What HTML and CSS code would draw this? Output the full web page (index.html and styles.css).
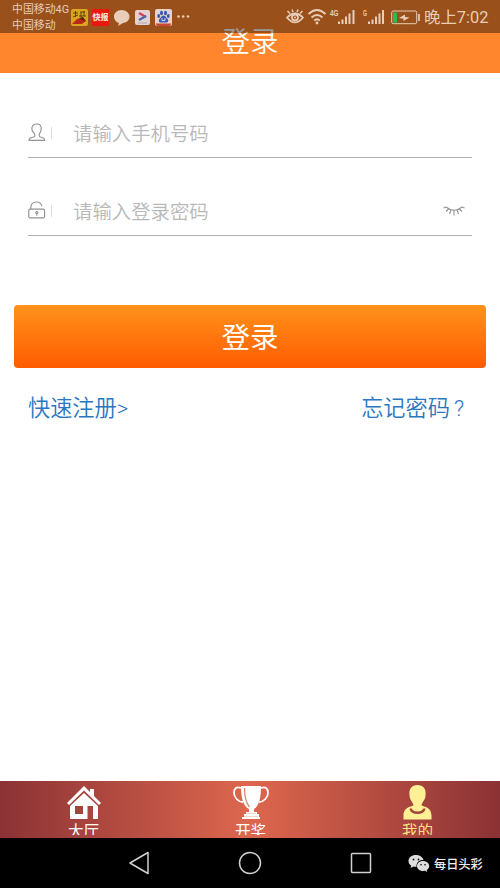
FILE: index.html
```html
<!DOCTYPE html>
<html lang="zh-CN">
<head>
<meta charset="utf-8">
<title>登录</title>
<link rel="stylesheet" href="styles.css">
</head>
<body>
<div class="screen">
  <header class="header">
    <h1 class="title">登录</h1>
    <div class="status">
      <div class="carrier"><div>中国移动4G</div><div>中国移动</div></div>
      <div class="notices">
        <svg class="app" viewBox="0 0 17 17"><rect width="17" height="17" rx="2" fill="#dba51f"/><path d="M2 4h5M4.500 2v6M2 8l5-2M9 3h5M10 3v5M13 2v5M8 7h7" stroke="#57390f" stroke-width=".9" fill="none"/><path d="M1 15l5-5 4-1 5 3-4 3z" fill="#b92915"/><path d="M8 9l4-1 3 4-4-1z" fill="#61220f"/></svg>
        <div class="app news">快报</div>
        <svg class="app" viewBox="0 0 17 17"><path d="M8.500 1C4 1 1 4 1 7.500S4 14 6 14l-1 3 5-3c4-.5 6.500-3 6.500-6.500C16.500 4 13 1 8.500 1z" fill="#e8cdb8"/></svg>
        <svg class="app" viewBox="0 0 17 17"><rect x="1" y="1" width="15" height="15" rx="2" fill="#e3d2d0"/><path d="M5 4l7 4" stroke="#d9415b" stroke-width="2.500"/><path d="M12 7l-7 4" stroke="#5468a8" stroke-width="2.500"/><path d="M4 14h9" stroke="#b4a5aa"/></svg>
        <svg class="app" viewBox="0 0 17 17"><rect width="17" height="17" rx="2" fill="#e3d2d0"/><g fill="#3657b2"><ellipse cx="6.500" cy="4" rx="1.500" ry="2.200"/><ellipse cx="10.500" cy="4" rx="1.500" ry="2.200"/><ellipse cx="3.700" cy="7" rx="1.400" ry="2"/><ellipse cx="13.300" cy="7" rx="1.400" ry="2"/><path d="M8.500 6.500C6 7 6 9 4.500 10s-.5 4 2 3.500h4c2.500.5 3.500-2.500 2-3.500S11 7 8.500 6.500z"/></g><path d="M7 9v2.500h3V9" stroke="#e3d2d0" fill="none"/><path d="M1 14.500h15v.5q0 2-2 2H3q-2 0-2-2z" fill="#cc4536"/></svg>
        <svg class="dots" viewBox="0 0 13 17"><g fill="#e8cdb8"><circle cx="1.500" cy="8.500" r="1.300"/><circle cx="6.200" cy="8.500" r="1.300"/><circle cx="11" cy="8.500" r="1.300"/></g></svg>
      </div>
      <svg class="signals" viewBox="0 0 136 22" fill="none" stroke="#e8cdb8">
        <path d="M1 12.500q8-8 16 0-8 10-16 0z" stroke-width="1.700"/><circle cx="9" cy="12.500" r="3" stroke-width="1.800"/><circle cx="9" cy="12.500" r="1" fill="#e8cdb8" stroke="none"/><path d="M1.500 6l2.500 2.500M6 4.500l1 2.500M12 4.500l-1 2.500M16.500 6l-2.500 2.500" stroke-width="1.500"/>
        <path d="M22.500 9q8.500-8 17 0M25.500 12.500q5.500-5 11 0M28.200 15.500q2.800-2.500 5.600 0" stroke-width="1.800"/><circle cx="31" cy="18" r="1.400" fill="#e8cdb8" stroke="none"/>
        <g fill="#e8cdb8" stroke="none"><path d="M52 16.500h2V19h-2zM55.500 14.500h2V19h-2zM59 11.500h2V19h-2zM62.500 8.500h2V19h-2zM66.500 5h2v14h-2zM82 16.500h2V19h-2zM85.500 14.500h2V19h-2zM89 11.500h2V19h-2zM92.500 8.500h2V19h-2zM96 5h2v14h-2z"/><text x="44" y="11" class="net" textLength="8.500" lengthAdjust="spacingAndGlyphs">4G</text><text x="77" y="11" class="net" textLength="4" lengthAdjust="spacingAndGlyphs">G</text></g>
        <rect x="105.700" y="6" width="25" height="12.700" rx="1.500" stroke-width="1"/><path d="M107 7.500h4v10h-4z" fill="#27bd4c" stroke="none"/><path d="M113 13l6-3.500v2.500l4.500 0.500-6 3.500v-2.300z" fill="#e8cdb8" stroke="none"/><path d="M133 9v7" stroke-width="1.700"/>
      </svg>
      <div class="time">晚上7:02</div>
    </div>
  </header>
  <main class="main">
    <div class="field">
      <svg class="icon" viewBox="0 0 19 21"><path d="M7 12C2 7 4 1.500 9.500 1.500S15 8 12 12q-1 3 2 3.500c3 .6 3.500 1.200 3.500 3.300h-16.500c0-2.100 1-2.700 4-3.300q3-.5 2-3.500z"/></svg>
      <span class="sep"></span><span class="hint">请输入手机号码</span>
    </div>
    <div class="field second">
      <svg class="icon" viewBox="0 0 19 21"><rect x=".8" y="9" width="16.700" height="9.300" rx="1.500"/><path d="M3 9V7.500C3 3.500 5.500 1.500 9 1.500c3 0 5 1.600 5.700 4.500M9.300 13.500v2.500"/><circle cx="9.300" cy="12.600" r="1.100"/></svg>
      <span class="sep"></span><span class="hint">请输入登录密码</span>
      <svg class="lash" viewBox="0 0 22 10"><path d="M3 1q8 6.500 16 0M.5 2L3 1M21.500 2L19 1M5.500 3L3 5.500M8 4L6.500 8M11 4.500V9.500M14 4l1.500 4M16.500 3l2.500 2.500"/></svg>
    </div>
    <div class="button">登录</div>
    <div class="links"><span>快速注册&gt;</span><span class="forgot">忘记密码<span class="question">?</span></span></div>
  </main>
  <nav class="tabs">
    <div class="tab"><svg viewBox="0 0 36 36" class="tabicon"><path d="M1 18L18 1l6 6V4h4v7l7 7-2 2L18 5.500 3 20z" fill="#fff"/><path d="M4 21L18 8l14 13v13H4zM9 21v8h8v-8zM21.500 21v13h5.500V21z" fill="#fff" fill-rule="evenodd"/></svg><span class="label">大厅</span></div>
    <div class="tab"><svg viewBox="0 0 36 36" class="tabicon"><path d="M8 1h20c0 12-2 20-7 23v3h3v2h2v3h1v2H9v-2h2v-3h2v-2h3v-3C10 21 8 13 8 1z" fill="#fff"/><path d="M8 3C3 1 1 4 1 8s4 9 9 9M28 3c5-2 7 1 7 5s-4 9-9 9" fill="none" stroke="#fff" stroke-width="1.800"/><path d="M11.500 3q0 13 5 19" fill="none" stroke="#d78b72" stroke-width="1.300"/><path d="M13 28.500h10M11 31.500h14" fill="none" stroke="#e8b8a8" stroke-width=".6"/></svg><span class="label">开奖</span></div>
    <div class="tab active"><svg viewBox="0 0 36 36" class="tabicon"><path d="M17.500 0c-5.500 0-9 4-8 10 0 5 3 6.500 4 10-1 2-10 1-10 11v3.500h28V31c0-10-9-9-10-11 1-3.500 4-5 4-10 1-6-2.500-10-8-10z" fill="#fff095"/><path d="M11 23.500c-1 5.500 14 5.500 13 0" fill="none" stroke="#a3463c" stroke-width="2.500"/></svg><span class="label">我的</span></div>
  </nav>
  <footer class="system">
    <svg class="keys" viewBox="0 0 244 26" fill="none" stroke="#d0d0d0" stroke-width="1.500"><path d="M1 13L19 2.500v21z" stroke-linejoin="round"/><circle cx="121" cy="13" r="10.500"/><rect x="222.500" y="3.500" width="19" height="19" rx="1"/></svg>
    <svg class="wechat" viewBox="0 0 22 19"><path d="M8 1C3.500 1 .5 3.700.5 7c0 2 1 3.700 2.700 4.800L2.500 14l3-1.500q1.500.5 3 .3C8 8 12 5.500 15.500 6 14.700 3 12 1 8 1z" fill="#ddd"/><path d="M15 7c-3.500 0-6 2.200-6 5s2.500 5 6 5l2-.3 2.200 1.300-.5-2c1.500-1 2.500-2.300 2.500-4 0-2.800-2.700-5-6.200-5z" fill="#ddd"/><g fill="#000"><circle cx="5.500" cy="5.500" r=".9"/><circle cx="10.500" cy="5.500" r=".9"/><circle cx="13" cy="10.700" r=".8"/><circle cx="17" cy="10.700" r=".8"/></g></svg>
    <span class="brand">每日头彩</span>
  </footer>
</div>
</body>
</html>
```
FILE: styles.css
```css
* { box-sizing: border-box; }
body { margin: 0; font-family: Roboto, "Noto Sans CJK SC", sans-serif; background: #fff; }
.screen { width: 500px; height: 888px; display: flex; flex-direction: column; overflow: hidden; }
svg { display: block; flex: none; }

.header { position: relative; height: 73px; flex: none; background: #ff862c; }
.title { margin: 0; padding-top: 23px; text-align: center; font-size: 28.5px; line-height: 40px; font-weight: 350; color: #fff; }
.status { position: absolute; top: 0; left: 0; width: 500px; height: 33px; display: flex; padding-left: 12px; background: rgba(0, 0, 0, 0.4); color: #e8cdb8; }
.carrier { width: 59px; padding-top: 2px; font-size: 10.9px; line-height: 15.500px; white-space: nowrap; }
.notices { display: flex; gap: 4px; padding-top: 9px; width: 215px; }
.app { width: 17px; height: 17px; flex: none; }
.news { background: #e9180d; border-radius: 1px; color: #f9dcc9; font-size: 8px; font-weight: 900; line-height: 17px; text-align: center; }
.dots { width: 13px; height: 17px; margin-left: 1px; margin-top: -1px; }
.signals { width: 136px; height: 22px; margin-top: 5px; }
.net { font: bold 8.5px "Liberation Sans", sans-serif; }
.time { padding-left: 2px; font-size: 16.4px; line-height: 35px; white-space: nowrap; }

.main { height: 708px; flex: none; padding: 36px 14px 0; }
.field { display: flex; align-items: center; height: 49px; margin: 0 14px; border-bottom: 1px solid #b0b0b0; }
.second { margin-top: 29px; }
.icon { width: 18px; height: 21px; margin-top: -2px; fill: none; stroke: #929292; stroke-width: 1.2; }
.sep { width: 1px; height: 12px; margin-left: 5px; background: #ddd; }
.hint { margin-left: 21px; padding-top: 3px; font-size: 19.4px; font-weight: 350; line-height: 30px; color: #b8b8b8; }
.lash { width: 22px; height: 10px; margin-left: auto; margin-right: 7px; fill: none; stroke: #929292; stroke-width: 1.1; }
.button { height: 63px; margin-top: 69px; border-radius: 4px; background: linear-gradient(#ff921b, #ff5c00); color: #fff; font-size: 28.5px; line-height: 67px; text-align: center; }
.links { display: flex; justify-content: space-between; padding: 23px 14px 0; font-size: 22.2px; font-weight: 350; line-height: 34px; color: #2a77c0; }
.forgot { margin-right: 8px; }
.question { margin-left: 4px; }

.tabs { height: 57px; flex: none; display: grid; grid-template-columns: repeat(3, 167px); background: linear-gradient(90deg, #8b3235, #dd674e 50%, #8b3235); color: #fff; overflow: hidden; }
.tab { height: 54px; overflow: hidden; display: flex; flex-direction: column; align-items: center; padding-top: 4px; }
.tabicon { width: 36px; height: 36px; }
.label { font-size: 15.6px; line-height: 22px; }
.active { color: #ffdf82; }
.system { height: 50px; flex: none; display: flex; align-items: center; padding-left: 129px; background: #000; }
.keys { width: 244px; height: 26px; }
.wechat { width: 22px; height: 19px; margin-left: 35px; }
.brand { margin-left: 4px; padding-top: 2px; font-size: 12.2px; font-weight: 500; color: #eee; white-space: nowrap; }
```
